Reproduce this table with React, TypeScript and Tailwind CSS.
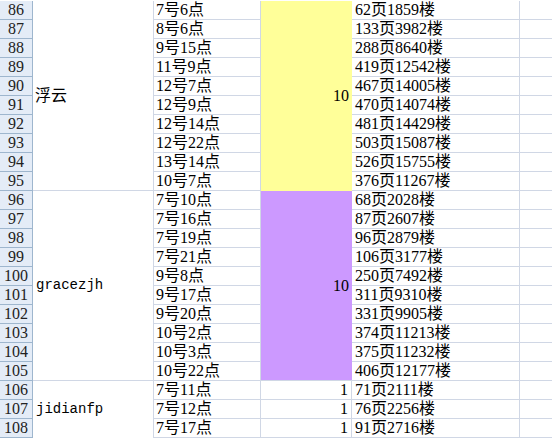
import React from "react";

const times = [
  "7号6点", "8号6点", "9号15点", "11号9点", "12号7点", "12号9点", "12号14点", "12号22点", "13号14点", "10号7点",
  "7号10点", "7号16点", "7号19点", "7号21点", "9号8点", "9号17点", "9号20点", "10号2点", "10号3点", "10号22点",
  "7号11点", "7号12点", "7号17点",
];

const floors = [
  "62页1859楼", "133页3982楼", "288页8640楼", "419页12542楼", "467页14005楼", "470页14074楼", "481页14429楼", "503页15087楼", "526页15755楼", "376页11267楼",
  "68页2028楼", "87页2607楼", "96页2879楼", "106页3177楼", "250页7492楼", "311页9310楼", "331页9905楼", "374页11213楼", "375页11232楼", "406页12177楼",
  "71页2111楼", "76页2256楼", "91页2716楼",
];

export default function App() {
  const cells: React.ReactNode[] = [];
  times.forEach((t, i) => {
    const n = 86 + i;
    cells.push(
      <div key={`h${i}`} className="bg-[#e4ecf7] border-r border-b border-[#9eb6ce] flex items-center justify-center text-[#222] leading-[18px]">
        {n}
      </div>
    );
    if (i === 0) {
      cells.push(
        <div key="b0" className="row-span-10 border-r border-b border-[#d0d7e5] flex items-center pl-[2px]">
          浮云
        </div>
      );
    } else if (i === 10) {
      cells.push(
        <div key="b1" className="row-span-10 border-r border-b border-[#d0d7e5] flex items-center pl-[3px] font-['Liberation_Mono',monospace] text-[14px]">
          gracezjh
        </div>
      );
    } else if (i === 20) {
      cells.push(
        <div key="b2" className="row-span-3 border-r border-[#d0d7e5] flex items-center pl-[3px] font-['Liberation_Mono',monospace] text-[14px]">
          jidianfp
        </div>
      );
    }
    cells.push(
      <div key={`c${i}`} className="border-r border-b border-[#d0d7e5] pl-[2px] leading-[18px] whitespace-nowrap overflow-hidden">
        {t}
      </div>
    );
    if (i === 0) {
      cells.push(
        <div key="d0" className="row-span-10 bg-[#ffff99] flex items-center justify-end pr-[3px]">
          10
        </div>
      );
    } else if (i === 10) {
      cells.push(
        <div key="d1" className="row-span-10 bg-[#cc99ff] border-b border-[#d0d7e5] flex items-center justify-end pr-[3px]">
          10
        </div>
      );
    } else if (i >= 20) {
      cells.push(
        <div key={`d${i}`} className="border-r border-b border-[#d0d7e5] text-right pr-[3px] leading-[18px]">
          1
        </div>
      );
    }
    cells.push(
      <div key={`e${i}`} className="border-r border-b border-[#d0d7e5] pl-[3px] leading-[18px] whitespace-nowrap overflow-hidden">
        {floors[i]}
      </div>
    );
    cells.push(<div key={`f${i}`} className="border-b border-[#d0d7e5]" />);
  });

  return (
    <div className="w-[552px] h-[438px] overflow-hidden bg-white pt-px font-['Liberation_Serif','Noto_Sans_CJK_SC',serif] text-[16px] text-black">
      <div className="grid grid-cols-[33px_121px_107px_91px_168px_1fr] auto-rows-[19px]">
        {cells}
      </div>
    </div>
  );
}
